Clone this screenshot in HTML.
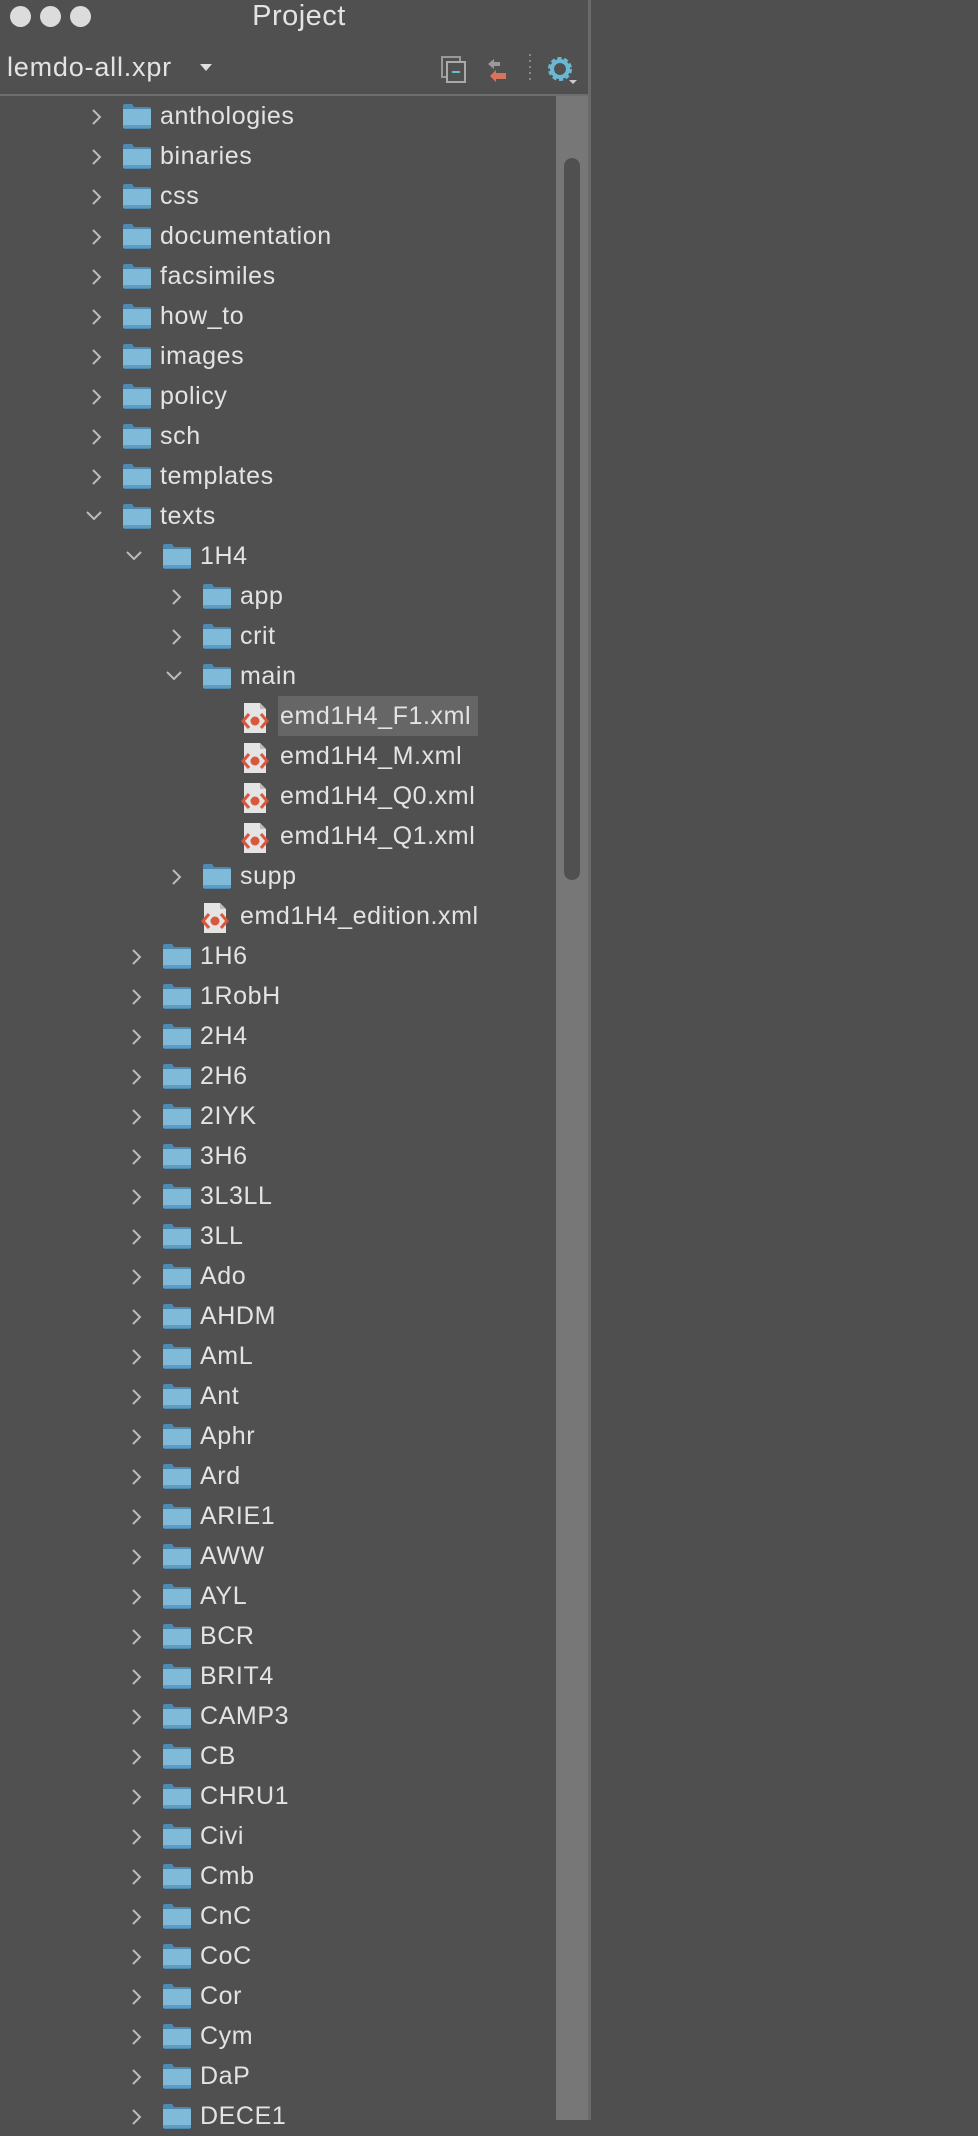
<!DOCTYPE html>
<html><head><meta charset="utf-8"><style>
body{margin:0;width:978px;height:2120px;background:#4f4f4f;overflow:hidden;font-family:"Liberation Sans",sans-serif;color:#e3e3e3;position:relative}
.panel{position:absolute;left:0;top:0;width:588px;height:2120px;background:#505050;border-right:3px solid #6a6a6a}
.dot{position:absolute;top:6px;width:21px;height:21px;border-radius:50%;background:#dcdcdc}
.title{position:absolute;top:0;left:0;width:598px;text-align:center;font-size:29px;line-height:32px;letter-spacing:0.5px}
.proj{position:absolute;left:7px;top:52px;font-size:27px;letter-spacing:0.8px}
.hline{position:absolute;left:0;top:94px;width:588px;height:2px;background:#6e6e6e}
.track{position:absolute;left:556px;top:96px;width:32px;height:2024px;background:#777}
.thumb{position:absolute;left:564px;top:158px;width:16px;height:722px;border-radius:8px;background:#505050}
.r{position:absolute;height:40px;line-height:40px;font-size:25px;letter-spacing:0.6px;white-space:nowrap}
.r svg{position:absolute}
.sel{position:absolute;left:278px;top:696px;width:200px;height:40px;background:#666}
</style></head><body>
<div class="panel"></div>
<div class="dot" style="left:10px"></div><div class="dot" style="left:40px"></div><div class="dot" style="left:70px"></div>
<div class="title">Project</div>
<div class="proj">lemdo-all.xpr</div>
<svg style="position:absolute;left:200px;top:64px" width="14" height="9"><path d="M0 0H12L6 7Z" fill="#e0e0e0"/></svg>
<svg style="position:absolute;left:440px;top:55px" width="40" height="30"><rect x="2" y="2" width="18" height="20" fill="none" stroke="#999" stroke-width="2"/><rect x="7" y="7" width="18" height="20" fill="#505050" stroke="#aaa" stroke-width="2"/><rect x="12" y="16" width="8" height="2" fill="#6bc"/></svg>
<svg style="position:absolute;left:486px;top:58px" width="30" height="26"><path d="M2 6L8 1V4H14V8H8V11Z" fill="#999"/><path d="M4 18L10 12V15H20V21H10V24Z" fill="#d9735c"/></svg>
<svg style="position:absolute;left:529px;top:54px" width="4" height="28"><g fill="#888"><rect y="0" width="2" height="2"/><rect y="6" width="2" height="2"/><rect y="12" width="2" height="2"/><rect y="18" width="2" height="2"/><rect y="24" width="2" height="2"/></g></svg>
<svg style="position:absolute;left:546px;top:56px" width="36" height="30"><circle cx="14" cy="13" r="9" fill="none" stroke="#6ab8d4" stroke-width="6" stroke-dasharray="3.5 2.2"/><circle cx="14" cy="13" r="8" fill="none" stroke="#6ab8d4" stroke-width="4"/><path d="M23 24H31L27 28Z" fill="#ccc"/></svg>
<div class="hline"></div>
<div class="track"></div><div class="thumb"></div>
<div class="sel"></div>
<div id="tree"></div>
<script>
var rows=[["anthologies",0,"c"],["binaries",0,"c"],["css",0,"c"],["documentation",0,"c"],["facsimiles",0,"c"],["how_to",0,"c"],["images",0,"c"],["policy",0,"c"],["sch",0,"c"],["templates",0,"c"],["texts",0,"o"],["1H4",1,"o"],["app",2,"c"],["crit",2,"c"],["main",2,"o"],["emd1H4_F1.xml",3,"f"],["emd1H4_M.xml",3,"f"],["emd1H4_Q0.xml",3,"f"],["emd1H4_Q1.xml",3,"f"],["supp",2,"c"],["emd1H4_edition.xml",2,"f"]];
"1H6 1RobH 2H4 2H6 2IYK 3H6 3L3LL 3LL Ado AHDM AmL Ant Aphr Ard ARIE1 AWW AYL BCR BRIT4 CAMP3 CB CHRU1 Civi Cmb CnC CoC Cor Cym DaP DECE1".split(" ").forEach(function(n){rows.push([n,1,"c"])});
var h="";
rows.forEach(function(r,i){
 var top=96+40*i, x=40*r[1], t=r[2];
 var s='<div class="r" style="left:0;top:'+top+'px;width:556px">';
 if(t=="c") s+='<svg style="left:'+(91+x)+'px;top:13px" width="12" height="16"><path d="M2 1L9 8L2 15" fill="none" stroke="#bbb" stroke-width="2"/></svg>';
 if(t=="o") s+='<svg style="left:'+(86+x)+'px;top:14px" width="18" height="12"><path d="M1 2L8 9L15 2" fill="none" stroke="#bbb" stroke-width="2"/></svg>';
 if(t=="f"){
  var fx=(r[1]==3?241:201);
  s+='<svg style="left:'+fx+'px;top:6px" width="30" height="32"><path d="M3 1H19L25 7V31H3Z" fill="#e4e4e4"/><path d="M19 1V7H25" fill="#bbb"/><path d="M8 12L2 19L8 26M20 12L26 19L20 26" fill="none" stroke="#d9573a" stroke-width="3"/><circle cx="14" cy="19" r="4.5" fill="#d9573a"/></svg>';
  s+='<span style="position:absolute;left:'+(fx+39)+'px">'+r[0]+'</span>';
 } else {
  s+='<svg style="left:'+(122+x)+'px;top:7px" width="30" height="26"><path d="M1 3Q1 1 3 1H10L12 4H27Q29 4 29 6V24Q29 26 27 26H3Q1 26 1 24Z" fill="#4b8bb3"/><rect x="1" y="6" width="28" height="19" rx="1" fill="#7fbad8"/><rect x="1" y="22" width="28" height="3" fill="#5f9cc2"/></svg>';
  s+='<span style="position:absolute;left:'+(160+x)+'px">'+r[0]+'</span>';
 }
 h+=s+'</div>';
});
document.getElementById("tree").innerHTML=h;
</script>
</body></html>
